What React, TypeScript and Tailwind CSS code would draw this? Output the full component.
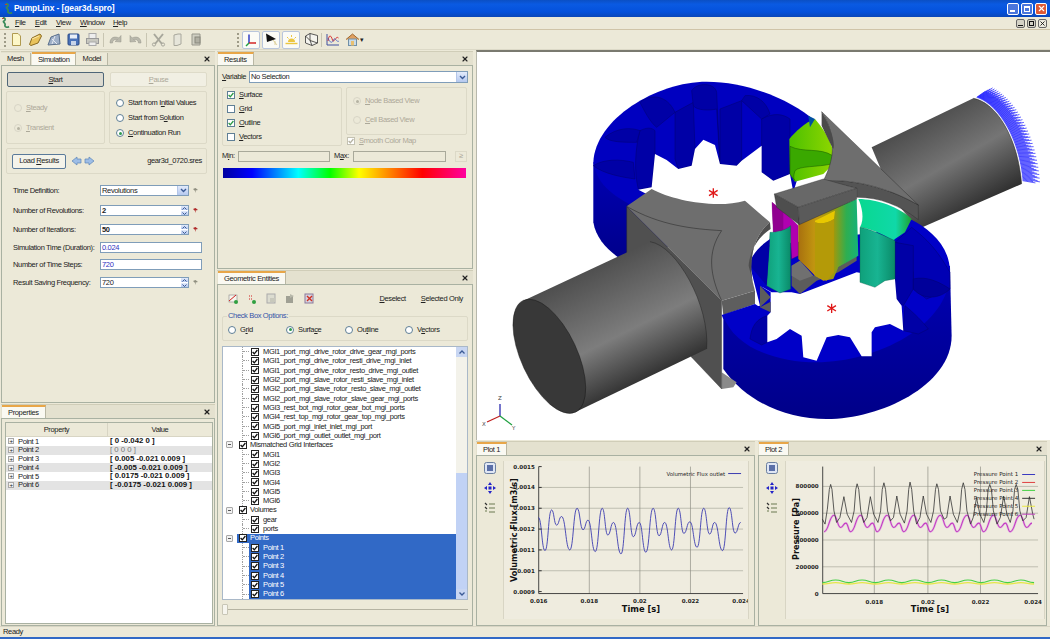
import React from "react";
import { X } from "lucide-react";

const FONT = "font-['Liberation_Sans',sans-serif]";

function smooth(p: number[][]) {
  let d = `M${p[0][0]} ${p[0][1]}`;
  for (let i = 1; i < p.length; i++) {
    const m = (p[i - 1][0] + p[i][0]) / 2;
    d += ` C${m} ${p[i - 1][1]} ${m} ${p[i][1]} ${p[i][0]} ${p[i][1]}`;
  }
  return d;
}

// curves read off the plots (zoom px)
const flux = [[185,235],[205,335],[225,212],[240,258],[255,232],[280,333],[302,207],[320,272],[335,243],[357,338],[378,207],[395,288],[412,250],[435,345],[455,207],[472,293],[490,250],[510,340],[532,207],[550,290],[567,250],[588,333],[608,207],[625,283],[643,248],[665,325],[685,207],[703,285],[718,250],[742,335],[762,205],[780,282],[797,250]].map(([x, y]) => [x / 3 + 476, y / 3 + 440]);
const press = [[197,240],[205,255],[212,210],[218,150],[222,135],[226,150],[232,215],[240,250],[250,235],[262,172],[272,225],[285,250],[293,215],[298,150],[302,133],[307,150],[313,215],[322,250],[332,235],[342,172],[352,225],[365,250],[373,215],[378,150],[383,130],[388,150],[394,215],[403,245],[412,235],[422,170],[432,225],[445,252],[453,215],[458,150],[462,128],[467,150],[473,215],[482,255],[492,235],[502,170],[512,225],[525,250],[533,215],[539,150],[543,133],[548,150],[554,215],[565,240],[573,235],[583,170],[593,225],[605,250],[613,215],[618,150],[623,130],[628,150],[634,215],[645,255],[653,235],[663,175],[673,225],[685,250],[693,215],[698,150],[703,135],[708,150],[714,215],[725,255],[735,235],[745,170],[755,225],[765,250],[773,215],[778,150],[783,135],[788,150],[794,215],[803,245],[813,235],[823,172],[833,225],[837,240]].map(([x, y]) => [x / 3 + 756, y / 3 + 440]);
const magenta = Array.from({ length: 9 }).flatMap((_, i) => {
  const o = 197 + i * 80.4;
  return [[o + 5, 278], [o + 35, 228], [o + 55, 265], [o + 71, 252]];
}).filter((p) => p[0] < 838).map(([x, y]) => [x / 3 + 756, y / 3 + 440]);
const wave = (base: number, amp: number) =>
  Array.from({ length: 17 }).map((_, i) => [(197 + i * 40) / 3 + 756, (base + (i % 2 ? -amp : amp)) / 3 + 440]);

function Panel({ tab, tabs, className, children }: { tab: string; tabs?: string[]; className?: string; children: React.ReactNode }) {
  const list = tabs ?? [tab];
  return (
    <div className={`flex flex-col min-h-0 ${className ?? ""}`}>
      <div className="flex h-[14px] shrink-0 items-stretch bg-[#e4e1cf] border-t border-[#d0cdb8]">
        {list.map((t) =>
          t === tab ? (
            <div key={t} className="flex items-center px-[6px] bg-[#faf9f2] border-t-2 border-[#e8a648] border-r border-r-[#b9b7a4] ml-px">{t}</div>
          ) : (
            <div key={t} className="flex items-center px-[6px] bg-[#ece9d8] border-r border-[#b9b7a4] mt-px">{t}</div>
          )
        )}
        <div className="ml-auto flex items-center pr-[4px]">
          <X size={8} strokeWidth={3.5} color="#222" />
        </div>
      </div>
      <div className="flex-1 min-h-0 border border-[#a9b1a2] bg-[#ece9d8] flex flex-col">{children}</div>
    </div>
  );
}

function Radio({ on, off, label, className }: { on?: boolean; off?: boolean; label: React.ReactNode; className?: string }) {
  return (
    <div className={`flex items-center gap-[4px] ${off ? "text-[#aca899]" : ""} ${className ?? ""}`}>
      <span className={`flex items-center justify-center w-[8px] h-[8px] rounded-full border ${off ? "border-[#d8d5c6] bg-[#ece9d8]" : "border-[#5f7f96] bg-white"}`}>
        {on && <span className={`w-[3px] h-[3px] rounded-full ${off ? "bg-[#b5b2a2]" : "bg-[#2f9a4f]"}`} />}
      </span>
      <span>{label}</span>
    </div>
  );
}

function Check({ on, tone = "green", off }: { on?: boolean; tone?: "green" | "black"; off?: boolean }) {
  const border = tone === "black" ? "border-[#222]" : off ? "border-[#c4c2b2]" : "border-[#5f7f96]";
  const stroke = tone === "black" ? "#111" : off ? "#b5b2a2" : "#2c9a45";
  return (
    <span className={`shrink-0 flex items-center justify-center w-[8px] h-[8px] border bg-white ${border}`}>
      {on && (
        <svg width="6" height="6" viewBox="0 0 6 6">
          <path d="M0.6 3 L2.3 4.8 L5.4 1" fill="none" stroke={stroke} strokeWidth="1.3" />
        </svg>
      )}
    </span>
  );
}

function Arrow() {
  return (
    <div className="w-[11px] shrink-0 border-l border-[#b4c6e8] bg-[linear-gradient(#e3ebfb,#b5c8ef)] flex items-center justify-center">
      <svg width="7" height="5" viewBox="0 0 7 5">
        <path d="M1 1 L3.5 3.5 L6 1" fill="none" stroke="#3a5a95" strokeWidth="1.4" />
      </svg>
    </div>
  );
}

function Spin() {
  return (
    <div className="w-[7px] shrink-0 flex flex-col gap-px bg-white">
      <div className="flex-1 bg-[linear-gradient(#e3ebfb,#b5c8ef)] flex items-center justify-center">
        <svg width="5" height="3" viewBox="0 0 5 3"><path d="M0.5 2.5 L2.5 0.5 L4.5 2.5" fill="none" stroke="#3a5a95" /></svg>
      </div>
      <div className="flex-1 bg-[linear-gradient(#e3ebfb,#b5c8ef)] flex items-center justify-center">
        <svg width="5" height="3" viewBox="0 0 5 3"><path d="M0.5 0.5 L2.5 2.5 L4.5 0.5" fill="none" stroke="#3a5a95" /></svg>
      </div>
    </div>
  );
}

function Pin({ red }: { red?: boolean }) {
  return (
    <svg width="7" height="7" viewBox="0 0 7 7" className="shrink-0 ml-[3px]">
      <path d="M1 2 L3.5 1 L6 3 L3.5 3.6 L4 6 L2.6 3.6 Z" fill={red ? "#b02a2a" : "#8f8f80"} />
    </svg>
  );
}

function FormRow({ label, kind, value, pin, bold, blue, className }: { label: string; kind: "combo" | "spin" | "text"; value: string; pin?: "red" | "gray"; bold?: boolean; blue?: boolean; className: string }) {
  return (
    <div className={`flex items-center h-[11px] ${className}`}>
      <div className="w-[87px] shrink-0 whitespace-nowrap">{label}</div>
      <div className={`flex items-stretch h-full border border-[#7f9db9] bg-white pl-px ${kind === "text" ? "w-[102px]" : "w-[89px]"}`}>
        <span className={`flex-1 leading-[9px] ${bold ? "font-bold" : ""} ${blue ? "text-[#3030c0]" : ""}`}>{value}</span>
        {kind === "combo" && <Arrow />}
        {kind === "spin" && <Spin />}
      </div>
      {pin && <Pin red={pin === "red"} />}
    </div>
  );
}

function Group({ className, children }: { className?: string; children: React.ReactNode }) {
  return <div className={`border border-[#dcd9c7] rounded-[2px] ${className ?? ""}`}>{children}</div>;
}

function Tool({ boxed, children }: { boxed?: boolean; children: React.ReactNode }) {
  return (
    <div className={`w-[18px] h-[18px] flex items-center justify-center ${boxed ? "bg-[#fbfbf6] border border-[#b9c6dc] rounded-[2px]" : ""}`}>
      <svg width="15" height="15" viewBox="0 0 15 15">{children}</svg>
    </div>
  );
}

function Grip() {
  return <div className="w-[2px] h-[14px] border-l-2 border-dotted border-[#9e9b88]" />;
}

function Logo() {
  return (
    <svg width="9" height="12" viewBox="0 0 9 12">
      <path d="M2 1 C4 0 5 3 3 4 C1 5 5 6 4 8 C3.5 10 6 11 8 9.5" fill="none" stroke="#3a8a58" strokeWidth="1.7" />
      <path d="M1 1.5 L3 1.5" stroke="#b34a3a" strokeWidth="1" />
    </svg>
  );
}

const GEOM = [
  "MGI1_port_mgi_drive_rotor_drive_gear_mgi_ports",
  "MGI1_port_mgi_drive_rotor_resti_drive_mgi_inlet",
  "MGI1_port_mgi_drive_rotor_resto_drive_mgi_outlet",
  "MGI2_port_mgi_slave_rotor_resti_slave_mgi_inlet",
  "MGI2_port_mgi_slave_rotor_resto_slave_mgi_outlet",
  "MGI2_port_mgi_slave_rotor_slave_gear_mgi_ports",
  "MGI3_rest_bot_mgi_rotor_gear_bot_mgi_ports",
  "MGI4_rest_top_mgi_rotor_gear_top_mgi_ports",
  "MGI5_port_mgi_inlet_inlet_mgi_port",
  "MGI6_port_mgi_outlet_outlet_mgi_port",
];

function Leaf({ text, sel }: { text: string; sel?: boolean }) {
  return (
    <div className="flex h-[9.38px] items-center pl-[19px] whitespace-nowrap">
      <div className="w-px h-full border-l border-dotted border-[#a0a0a0]" />
      <div className="w-[6px] border-t border-dotted border-[#a0a0a0]" />
      <div className={`flex-1 h-full flex items-center pl-[2px] gap-[4px] ${sel ? "bg-[#3169c6] text-white" : ""}`}>
        <Check on tone="black" />
        <span>{text}</span>
      </div>
    </div>
  );
}

function Parent({ text, sel }: { text: string; sel?: boolean }) {
  return (
    <div className="flex h-[9.38px] items-center pl-[3px] whitespace-nowrap">
      <span className="flex items-center justify-center w-[7px] h-[7px] border border-[#a8a8a8] bg-[#f2f2f2] rounded-[1px] text-[#666] mr-[4px]">
        <span className="w-[3px] h-px bg-[#555]" />
      </span>
      <div className={`flex-1 h-full flex items-center gap-[2px] pl-[2px] ${sel ? "bg-[#3169c6] text-white" : ""}`}>
        <Check on tone="black" />
        <span className="ml-[1px]">{text}</span>
      </div>
    </div>
  );
}

function PlotTools() {
  return (
    <div className="w-[26px] shrink-0 flex flex-col items-center gap-[8px] pt-[6px]">
      <svg width="12" height="12" viewBox="0 0 12 12">
        <rect x="0.5" y="0.5" width="11" height="11" rx="2" fill="#dfe6f4" stroke="#6a7f9f" />
        <rect x="3" y="3" width="6" height="6" fill="#5a6fa8" />
      </svg>
      <svg width="12" height="12" viewBox="0 0 12 12" fill="#2323c8">
        <path d="M6 0 L8 3 H4 Z M6 12 L4 9 H8 Z M0 6 L3 4 V8 Z M12 6 L9 8 V4 Z" />
        <rect x="4.5" y="4.5" width="3" height="3" />
      </svg>
      <svg width="12" height="12" viewBox="0 0 12 12">
        <path d="M1 1 L3 3 M1 5 L3 7" stroke="#333" strokeWidth="1.2" />
        <path d="M1 9 H3 M5 2 H11 M5 6 H11 M5 10 H11" stroke="#6a7a50" strokeWidth="1.2" />
      </svg>
    </div>
  );
}

function Plot1() {
  const ys: [string, number][] = [["0.0015",467],["0.0014",488],["0.0013",509],["0.0012",530],["0.0011",551],["0.001",572],["0.0009",593]];
  const xs: [string, number][] = [["0.016",538],["0.018",589],["0.02",640],["0.022",691],["0.024",742]];
  return (
    <svg viewBox="503 462 246 158" width="246" height="158" className="shrink-0 mt-[5px] block bg-[#efecdf] border-x border-[#d8d5c4] tracking-normal">
      {ys.slice(1, 6).map(([, y]) => <line key={y} x1="538" x2="744" y1={y} y2={y} stroke="#a9a99c" strokeWidth="0.7" />)}
      {xs.slice(1, 4).map(([, x]) => <line key={x} x1={x} x2={x} y1="467" y2="595" stroke="#8f8f85" strokeWidth="0.7" />)}
      <path d="M538 467 V595 H744" fill="none" stroke="#333" strokeWidth="0.9" />
      <path d={smooth(flux)} fill="none" stroke="#3a3ab0" strokeWidth="0.9" />
      {ys.map(([t, y]) => <g key={t}><line x1="538" x2="541" y1={y} y2={y} stroke="#333" /><text x="534" y={y + 2} textAnchor="end" fontSize="5.6" fontWeight="bold" fill="#222" fontFamily="DejaVu Sans">{t}</text></g>)}
      {xs.map(([t, x]) => <text key={t} x={x} y="605" textAnchor="middle" fontSize="5.6" fontWeight="bold" fill="#222" fontFamily="DejaVu Sans">{t}</text>)}
      <text x="726" y="476" textAnchor="end" fontSize="5.4" fill="#222" fontFamily="DejaVu Sans">Volumetric Flux outlet</text>
      <line x1="729" x2="742" y1="474" y2="474" stroke="#3a3ab0" />
      <text x="641" y="614" textAnchor="middle" fontSize="8.4" fontWeight="bold" fill="#111" fontFamily="DejaVu Sans">Time [s]</text>
      <text transform="translate(516 531) rotate(-90)" textAnchor="middle" fontSize="8.2" fontWeight="bold" fill="#111" fontFamily="DejaVu Sans">Volumetric Flux [m3/s]</text>
    </svg>
  );
}

function Plot2() {
  const ys: [string, number][] = [["800000",487],["600000",514],["400000",541],["200000",568],["0",595]];
  const xs: [string, number][] = [["0.018",874],["0.02",928],["0.022",981],["0.024",1034]];
  const legend: [string, string, number][] = [["Pressure Point 1","#3838c0",475],["Pressure Point 2","#e04040",483],["Pressure Point 3","#40d040",491],["Pressure Point 4","#333333",499],["Pressure Point 5","#e8e840",507],["Pressure Point 6","#c040c0",515]];
  return (
    <svg viewBox="785 462 260 158" width="260" height="158" className="shrink-0 mt-[5px] block bg-[#efecdf] border-x border-[#d8d5c4] tracking-normal">
      {ys.slice(0, 4).map(([, y]) => <line key={y} x1="822" x2="1039" y1={y} y2={y} stroke="#a9a99c" strokeWidth="0.7" />)}
      {xs.slice(0, 3).map(([, x]) => <line key={x} x1={x} x2={x} y1="467" y2="595" stroke="#8f8f85" strokeWidth="0.7" />)}
      <path d="M822 467 V595 H1039" fill="none" stroke="#333" strokeWidth="0.9" />
      <path d={smooth(wave(434, 2))} fill="none" stroke="#e6e648" strokeWidth="1.3" />
      <path d={smooth(wave(428, 4))} fill="none" stroke="#45d045" strokeWidth="1.1" />
      <path d={smooth(magenta)} fill="none" stroke="#e0a0e0" strokeWidth="2.4" opacity="0.6" />
      <path d={smooth(magenta)} fill="none" stroke="#c23cc2" strokeWidth="1.1" />
      <path d={`M${press.map((p) => p.join(" ")).join(" L")}`} fill="none" stroke="#333" strokeWidth="0.8" />
      {ys.map(([t, y]) => <text key={t} x="818" y={y + 2} textAnchor="end" fontSize="5.6" fontWeight="bold" fill="#222" fontFamily="DejaVu Sans">{t}</text>)}
      {xs.map(([t, x]) => <text key={t} x={x} y="605" textAnchor="middle" fontSize="5.6" fontWeight="bold" fill="#222" fontFamily="DejaVu Sans">{t}</text>)}
      {legend.map(([t, c, y]) => (
        <g key={t}>
          <text x="1019" y={y + 2} textAnchor="end" fontSize="5.6" fill="#222" fontFamily="DejaVu Sans">{t}</text>
          <line x1="1023" x2="1036" y1={y} y2={y} stroke={c} />
        </g>
      ))}
      <text x="930" y="614" textAnchor="middle" fontSize="8.4" fontWeight="bold" fill="#111" fontFamily="DejaVu Sans">Time [s]</text>
      <text transform="translate(798 530) rotate(-90)" textAnchor="middle" fontSize="8.2" fontWeight="bold" fill="#111" fontFamily="DejaVu Sans">Pressure [Pa]</text>
    </svg>
  );
}

function Asterisk({ x, y }: { x: number; y: number }) {
  return (
    <g stroke="#e01818" strokeWidth="4">
      <path d={`M${x} ${y - 14} V${y + 14} M${x - 13} ${y - 8} L${x + 13} ${y + 8} M${x - 13} ${y + 8} L${x + 13} ${y - 8}`} />
    </g>
  );
}

function Scene() {
  // drawn in coordinates of a 3x crop of the viewport
  const vectors = Array.from({ length: 150 }).map((_, i) => {
    const t = i / 149;
    const u = 1 - t;
    const x = u * u * u * 1250 + 3 * u * u * t * 1315 + 3 * u * t * t * 1378 + t * t * t * 1388;
    const y = u * u * u * 115 + 3 * u * u * t * 135 + 3 * u * t * t * 240 + t * t * t * 365;
    const a = (-35 + 45 * t) * (Math.PI / 180);
    const len = 32 + (i % 4) * 7;
    return [x, y, x + Math.cos(a) * len, y + Math.sin(a) * len];
  });
  return (
    <svg viewBox="477 53 573 388" className="block w-full h-full tracking-normal">
      <defs>
        <linearGradient id="cylL" gradientUnits="userSpaceOnUse" x1="60" y1="640" x2="240" y2="1000">
          <stop offset="0" stopColor="#4e4e4e" />
          <stop offset="0.55" stopColor="#7d7d7d" />
          <stop offset="1" stopColor="#262626" />
        </linearGradient>
        <linearGradient id="cylR" gradientUnits="userSpaceOnUse" x1="1060" y1="190" x2="1220" y2="470">
          <stop offset="0" stopColor="#4c4c4c" />
          <stop offset="0.5" stopColor="#757575" />
          <stop offset="1" stopColor="#2e2e2e" />
        </linearGradient>
        <linearGradient id="mid" x1="0" x2="1" y1="0" y2="0">
          <stop offset="0" stopColor="#a8700f" />
          <stop offset="0.3" stopColor="#c49a10" />
          <stop offset="0.6" stopColor="#9a9a10" />
          <stop offset="0.8" stopColor="#2fae50" />
          <stop offset="1" stopColor="#14b27a" />
        </linearGradient>
        <linearGradient id="teal" x1="0" x2="1" y1="0" y2="0">
          <stop offset="0" stopColor="#0fa07a" />
          <stop offset="0.5" stopColor="#18b492" />
          <stop offset="1" stopColor="#0a8a68" />
        </linearGradient>
        <linearGradient id="tealTop" x1="0" x2="1" y1="0" y2="0">
          <stop offset="0" stopColor="#08d890" />
          <stop offset="0.7" stopColor="#10d8a8" />
          <stop offset="1" stopColor="#20a030" />
        </linearGradient>
        <linearGradient id="blueSide" x1="0" x2="0" y1="0" y2="1">
          <stop offset="0" stopColor="#0000b4" />
          <stop offset="1" stopColor="#000088" />
        </linearGradient>
        <linearGradient id="greenTop" x1="0" x2="1" y1="0" y2="0">
          <stop offset="0" stopColor="#4cc000" />
          <stop offset="1" stopColor="#8ed600" />
        </linearGradient>
      </defs>
      <g transform="translate(560 60) scale(0.3333)">
        {/* back ring */}
        <path d="M100 310 L100 490 C110 550 160 590 215 620 L330 560 L300 400 Z" fill="url(#blueSide)" />
        <path d="M100 310 C105 180 290 68 440 68 C560 68 690 120 765 185 L700 400 L240 450 C170 420 110 380 100 310 Z" fill="#0000c0" />
        <g fill="#0000a6" stroke="#000070" strokeWidth="1.5">
          <path d="M240 215 C260 205 275 205 285 215 L285 285 L275 385 L235 390 C222 340 225 270 240 215 Z" />
          <path d="M345 160 L400 130 L405 270 L395 320 L355 330 L345 300 Z" />
          <path d="M395 95 C410 70 465 70 470 100 L480 315 L470 150 C450 155 410 155 400 140 Z" />
          <path d="M480 150 L545 125 L545 305 L530 320 L490 320 L480 315 Z" />
          <path d="M605 180 C640 160 670 165 690 180 L690 345 L640 365 L605 340 Z" />
          <path d="M100 320 C130 300 180 300 220 310 L225 360 C190 355 130 345 100 320 Z" />
          <path d="M135 235 C170 205 215 205 240 215 L230 250 C190 250 150 250 135 235 Z" />
          <path d="M240 130 C270 105 320 105 345 160 L290 205 C270 190 250 150 240 130 Z" />
          <path d="M555 110 C590 105 620 130 630 165 L605 180 L545 125 Z" />
        </g>
        <path d="M235 392 L275 385 L285 285 L320 303 L355 330 L395 320 L405 270 L430 242 L465 258 L480 315 L530 320 L545 305 L605 260 L605 340 L640 365 L690 345 L700 400 L640 440 L450 450 L270 410 Z" fill="#ffffff" />
        <path d="M688 240 C705 220 735 190 765 180 C800 220 820 260 820 290 L815 320 L790 345 L705 368 L690 345 Z" fill="url(#greenTop)" />
        <path d="M690 262 C730 282 780 265 818 290 L815 315 C770 325 720 320 705 335 C700 350 700 360 705 365 L690 345 Z" fill="#3aa800" stroke="#1a5a00" strokeWidth="1.5" />
        <path d="M745 170 L765 180 L750 205 Z" fill="#0050a0" />

        {/* right shaft and flow vectors */}
        <g stroke="#0c0cff" strokeWidth="2">
          {vectors.map((v, i) => <line key={i} x1={v[0]} y1={v[1]} x2={v[2]} y2={v[3]} />)}
        </g>
        <path d="M935 265 L1240 118 C1310 130 1375 240 1385 375 L1075 510 L1000 420 Z" fill="url(#cylR)" />
        <path d="M1240 118 C1310 130 1375 240 1385 375" fill="none" stroke="#222" strokeWidth="1.5" />

        {/* front ring */}
        <path d="M490 770 L490 930 C560 1030 680 1080 800 1080 C960 1080 1175 980 1175 830 L1170 620 L600 740 Z" fill="url(#blueSide)" />
        <path d="M490 770 C520 860 640 910 770 910 C950 910 1170 800 1170 640 C1170 560 1110 510 1050 480 L950 520 L620 560 L570 620 L600 740 Z" fill="#0000c8" />
        <path d="M1005 550 L1055 505 C1100 540 1130 570 1170 640 L1170 690 L1100 720 L1060 690 L1060 640 Z" fill="#0000b4" stroke="#000070" strokeWidth="1.5" />
        <path d="M1005 550 L1060 560 L1060 690 L1030 740 L1005 720 Z" fill="#0000a6" stroke="#000070" strokeWidth="1.5" />
        <path d="M1060 660 C1100 650 1140 670 1170 690 C1140 720 1090 725 1060 690 Z" fill="#00009a" stroke="#000070" strokeWidth="1.5" />
        <path d="M1030 815 L1035 740 C1060 760 1090 790 1105 810 L1075 825 Z" fill="#0000a6" stroke="#000070" strokeWidth="1.5" />
        <path d="M570 840 C575 800 590 780 622 770 L622 850 L605 858 Z" fill="#0000a6" stroke="#000070" strokeWidth="1.5" />
        <path d="M600 680 L635 700 L695 700 L720 705 L890 640 L1005 660 L1010 720 L1025 740 L1030 815 L990 795 L945 805 L935 820 L935 892 L905 892 L870 835 L835 828 L800 835 L770 905 L730 895 L725 830 L690 810 L650 840 L622 850 L622 770 L632 760 L632 700 Z" fill="#ffffff" />
        <path d="M695 620 L720 605 L760 650 L835 625 L890 590 L890 605 L835 640 L770 665 L720 705 L695 680 Z" fill="#5c5c5c" />
        <path d="M695 620 L720 605 L760 650 L720 665 L695 650 Z" fill="#707070" />

        {/* coloured gear teeth */}
        <path d="M636 430 L680 465 L715 500 L715 590 L695 600 L690 510 L640 520 Z" fill="#b000b0" stroke="#500050" strokeWidth="1" />
        <path d="M636 430 L670 460 L670 515 L640 520 Z" fill="#900090" />
        <path d="M715 490 L890 420 L895 590 L835 625 L820 660 L790 665 L765 650 L755 640 L715 600 Z" fill="url(#mid)" />
        <path d="M765 485 L825 455 L822 480 C800 495 780 495 765 490 Z" fill="#e8c800" />
        <path d="M765 490 C780 495 800 495 822 480 L822 640 L800 665 L765 650 Z" fill="#b49a08" />
        <path d="M895 420 C950 420 1020 445 1055 480 L1035 520 L1005 540 L1000 545 C960 520 930 510 900 505 C915 480 905 440 895 420 Z" fill="url(#tealTop)" />
        <path d="M900 505 C930 510 950 520 1005 545 L1005 660 L975 665 L945 685 L900 670 Z" fill="url(#teal)" stroke="#0c5c48" strokeWidth="1" />
        <path d="M630 520 C650 520 675 515 692 500 L692 690 L660 702 L620 680 Z" fill="url(#teal)" stroke="#0c5c48" strokeWidth="1" />
        <path d="M570 620 C570 590 600 560 630 540 L620 680 Z" fill="#0000a6" />

        {/* left plate */}
        <path d="M485 940 L530 970 L520 985 L485 990 Z" fill="#8a8a8a" />
        <path d="M200 442 L485 725 L485 990 L395 895 L200 610 Z" fill="#505050" stroke="#222" strokeWidth="1" />
        <path d="M485 725 L585 695 L585 735 L490 768 Z" fill="#5e5e5e" />
        <path d="M485 768 L585 735 L600 745 L490 780 Z" fill="#0000c8" />
        <path d="M200 442 L275 390 C340 425 470 450 555 425 L630 490 C590 520 555 600 585 695 L485 725 Z" fill="#6e6e6e" />
        <path d="M630 490 L632 510 C600 530 570 570 566 620 L585 695 C555 600 590 520 630 490 Z" fill="#4e4e4e" />
        <path d="M200 442 C300 500 400 510 485 515 C440 580 450 650 485 725" fill="none" stroke="#222" strokeWidth="1.5" />
        <path d="M600 680 L632 715 L600 745 L632 728 L632 760 L600 745 Z" fill="#5c5c5c" />

        {/* right plate and block */}
        <path d="M790 365 C900 360 1000 395 1075 438 L1075 482 C1020 440 960 415 890 415 L890 388 Z" fill="#545454" stroke="#222" strokeWidth="1" />
        <path d="M785 158 L1075 438 C1000 395 900 360 790 365 C825 300 830 230 785 158 Z" fill="#6e6e6e" stroke="#222" strokeWidth="1.2" />
        <path d="M785 158 C830 230 825 290 815 262 L785 200 Z" fill="#4a4a4a" />
        <path d="M643 405 L790 360 L890 388 L715 445 Z" fill="#686868" stroke="#222" strokeWidth="1" />
        <path d="M643 405 L715 445 L718 497 L650 445 Z" fill="#4e4e4e" stroke="#222" strokeWidth="1" />
        <path d="M715 445 L890 388 L890 420 L718 497 Z" fill="#5a5a5a" stroke="#222" strokeWidth="1" />

        {/* left shaft */}
        <path d="M-110 725 L270 548 C350 560 450 740 440 870 L45 1060 Z" fill="url(#cylL)" />
        <path d="M270 548 C350 560 450 740 440 870" fill="none" stroke="#222" strokeWidth="1.5" />
        <ellipse cx="-32" cy="892" rx="185" ry="84" transform="rotate(65 -32 892)" fill="#383838" stroke="#111" strokeWidth="1.2" />

        <Asterisk x={460} y={402} />
        <Asterisk x={815} y={748} />
      </g>
      {/* axis triad */}
      <g strokeWidth="1.3" fill="none">
        <path d="M500 417 V405" stroke="#2a2ab0" />
        <path d="M500 417 L487 423" stroke="#c02020" />
        <path d="M500 417 L512 426" stroke="#20a040" />
      </g>
      <text x="498" y="401" fontSize="5.5" fontFamily="DejaVu Sans" fill="#444">Z</text>
      <text x="482" y="427" fontSize="5.5" fontFamily="DejaVu Sans" fill="#444">X</text>
      <text x="512" y="431" fontSize="5.5" fontFamily="DejaVu Sans" fill="#444">Y</text>
    </svg>
  );
}

export default function App() {
  return (
    <div className={`w-[1050px] h-[639px] overflow-hidden flex flex-col bg-[#ece9d8] text-[#222] text-[7.5px] leading-none tracking-[-0.35px] ${FONT}`}>
      {/* Title bar */}
      <header className="h-[17px] shrink-0 flex items-center pl-[4px] pr-[3px] bg-[linear-gradient(#0b4fc4,#0a5ae2_25%,#0451dc_70%,#0a47b8)]">
        <Logo />
        <span className="ml-px text-white font-bold text-[8.5px] tracking-[-0.1px]">PumpLinx - [gear3d.spro]</span>
        <div className="ml-auto flex gap-[2px]">
          <div className="w-[12px] h-[12px] rounded-[2px] border border-white bg-[#4a76dc] flex items-end pl-[2px] pb-[2px]"><span className="w-[5px] h-[2px] bg-white" /></div>
          <div className="w-[12px] h-[12px] rounded-[2px] border border-white bg-[#4a76dc] flex items-center justify-center"><span className="w-[6px] h-[6px] border border-white border-t-2" /></div>
          <div className="w-[12px] h-[12px] rounded-[2px] border border-white bg-[#de5a36] flex items-center justify-center"><X size={9} strokeWidth={3} color="#fff" /></div>
        </div>
      </header>

      {/* Menu */}
      <div className="h-[13px] shrink-0 flex items-center pl-[1px] pr-[3px] border-b border-[#cfc4a8]">
        <Logo />
        <span className="ml-[5px] w-[20px]"><u>F</u>ile</span>
        <span className="w-[21px]"><u>E</u>dit</span>
        <span className="w-[24px]"><u>V</u>iew</span>
        <span className="w-[33px]"><u>W</u>indow</span>
        <span><u>H</u>elp</span>
        <div className="ml-auto flex gap-[2px]">
          <div className="w-[9px] h-[9px] bg-[#d4d2c6] border border-[#666] rounded-[2px] flex items-end justify-center pb-px"><span className="w-[5px] h-px bg-[#111]" /></div>
          <div className="w-[9px] h-[9px] bg-[#d4d2c6] border border-[#666] rounded-[2px] flex items-center justify-center"><span className="w-[5px] h-[5px] border border-[#111]" /></div>
          <div className="w-[9px] h-[9px] bg-[#eceae0] border border-[#666] rounded-[2px] flex items-center justify-center"><X size={7} strokeWidth={3} color="#111" /></div>
        </div>
      </div>

      {/* Toolbar */}
      <div className="h-[20px] shrink-0 flex items-center pl-[4px] border-b border-[#dcd9c7]">
        <Grip />
        <div className="ml-[1px] flex items-center gap-px">
          <Tool><path d="M3.5 1.5 H9 L11.5 4 V13.5 H3.5 Z" fill="#fdf7c8" stroke="#b09a50" /></Tool>
          <Tool><path d="M1.5 12.5 L4 6 L12 2 L13.5 4 L10 11 L3 13.5 Z" fill="#e9c35c" stroke="#8a6a20" /><path d="M4 7 L11 4" stroke="#fbe9a8" /></Tool>
          <Tool><path d="M1 13 L4 5 L12 2 L13 12 Z" fill="#9fb0c8" stroke="#5a6f8c" /><path d="M5 7 L10 12 M8 4 L5 12" stroke="#e4e8f0" /></Tool>
          <Tool><rect x="2" y="2" width="11" height="11" rx="1" fill="#4a72b8" stroke="#2b4a86" /><rect x="4" y="2.5" width="7" height="4" fill="#e8eef8" /><rect x="5" y="9" width="5" height="4" fill="#c8d4e8" /></Tool>
          <Tool><rect x="4" y="1.5" width="7" height="5" fill="#eee" stroke="#aaa" /><rect x="1.5" y="6.5" width="12" height="5" fill="#c8c8c0" stroke="#999" /><rect x="4" y="10" width="7" height="3.5" fill="#eee" stroke="#aaa" /></Tool>
        </div>
        <div className="mx-[2px] w-px h-[14px] bg-[#c8c5b2]" />
        <div className="flex items-center gap-[2px]">
          <Tool><path d="M2 11 C2 5 7 4 11 6 L13 3.5 L13 10 L7 9.5 L9.5 7.5 C7 7 4.5 8 4.5 11 Z" fill="#b9b8ac" stroke="#96958a" strokeWidth="0.5" /></Tool>
          <Tool><path d="M13 11 C13 5 8 4 4 6 L2 3.5 L2 10 L8 9.5 L5.5 7.5 C8 7 10.5 8 10.5 11 Z" fill="#b9b8ac" stroke="#96958a" strokeWidth="0.5" /></Tool>
        </div>
        <div className="mx-[2px] w-px h-[14px] bg-[#c8c5b2]" />
        <div className="flex items-center gap-px">
          <Tool><path d="M3 2 L11 12 M12 2 L4 12" stroke="#a8a79c" strokeWidth="2" /><circle cx="3" cy="12.5" r="1.6" fill="none" stroke="#a8a79c" /><circle cx="12" cy="12.5" r="1.6" fill="none" stroke="#a8a79c" /></Tool>
          <Tool><path d="M4 3 L8 2 H11 V12 L7 13.5 H4 Z" fill="#e6e5da" stroke="#a8a79c" /></Tool>
          <Tool><path d="M3 2 H11 V13 H3 Z" fill="#cfcec2" stroke="#98978c" /><rect x="6" y="5" width="5" height="6" fill="#b0afa3" stroke="#88877c" /></Tool>
        </div>
        <div className="ml-[32px]"><Grip /></div>
        <div className="ml-[3px] flex items-center gap-[2px]">
          <Tool boxed><path d="M5 11 V2.5" stroke="#2030c0" strokeWidth="1.4" /><path d="M5 11 L12 11" stroke="#d01818" strokeWidth="1.4" /><path d="M5 11 L2 14" stroke="#20a040" strokeWidth="1.4" /></Tool>
          <Tool boxed><path d="M2 1.5 L12 7 L3 10 Z" fill="#111" /><path d="M9 8 L13 13 M11 9 L11 13" stroke="#d8c888" strokeWidth="0.8" /></Tool>
          <Tool boxed><path d="M4 10 A3.5 3.5 0 0 1 11 10 Z" fill="#ecc640" /><path d="M1.5 11.5 H13.5" stroke="#ecc640" strokeWidth="1.4" /><path d="M7.5 3 V5 M3 5 L4.5 6.5 M12 5 L10.5 6.5" stroke="#ecc640" /></Tool>
          <Tool><path d="M1.5 4 L6 1.5 L13.5 3.5 V11 L8 13.5 L1.5 11 Z M6 1.5 V8.5 M1.5 4 L6 8.5 L13.5 11 M6 8.5 L8 13.5" fill="#f4f4ee" stroke="#333" strokeWidth="0.8" /></Tool>
          <div className="-mx-[1px] w-px h-[14px] bg-[#c8c5b2]" />
          <Tool><path d="M2 2 V13 H14" fill="none" stroke="#4050a0" /><path d="M3 9 C4 2 6 3 7.5 8 C9 12 11 3 13.5 6" fill="none" stroke="#d83030" /><path d="M3 6 C5 11 7 12 9 7 C10 5 12 11 14 9" fill="none" stroke="#3050c0" strokeWidth="0.7" /></Tool>
          <Tool><path d="M1 7.5 L7.5 2 L14 7.5" fill="#e0a060" stroke="#a06830" /><rect x="3.5" y="7" width="8" height="6.5" fill="#c9dbe8" stroke="#7090a8" /><rect x="6" y="9" width="3" height="4.5" fill="#e9c070" /></Tool>
          <span className="text-[7px] -ml-[3px]">▾</span>
        </div>
      </div>

      {/* Main */}
      <main className="flex-1 min-h-0 flex">
        {/* left column */}
        <div className="w-[216px] shrink-0 pl-px pr-[1px] pt-px flex flex-col gap-[1px]">
          <Panel tab="Simulation" tabs={["Mesh", "Simulation", "Model"]} className="h-[352px]">
            <div className="flex flex-col px-[4px] pt-[6px]">
              <div className="flex gap-[6px] pl-[1px]">
                <button className="w-[97px] h-[15px] rounded-[2px] border border-[#4f6678] bg-[#dcdad0]"><u>S</u>tart</button>
                <button className="w-[97px] h-[15px] rounded-[2px] border border-[#dedbc9] bg-[#f1efe3] text-[#aca899]"><u>P</u>ause</button>
              </div>
              <div className="flex gap-[4px] mt-[4px]">
                <Group className="w-[99px] h-[53px] flex flex-col gap-[12px] pl-[7px] pt-[12px]">
                  <Radio off label={<><u>S</u>teady</>} />
                  <Radio off on label={<><u>T</u>ransient</>} />
                </Group>
                <Group className="w-[98px] h-[53px] flex flex-col gap-[7px] pl-[6px] pt-[7px]">
                  <Radio label={<>Start from I<u>n</u>itial Values</>} />
                  <Radio label={<>Start from S<u>o</u>lution</>} />
                  <Radio on label={<><u>C</u>ontinuation Run</>} />
                </Group>
              </div>
              <Group className="mt-[4px] h-[26px] w-[201px] flex items-center pl-[5px] pr-[4px]">
                <button className="w-[54px] h-[15px] rounded-[2px] border border-[#5a7a9a] bg-[#f4f3ea]">Load <u>R</u>esults</button>
                <svg width="24" height="10" viewBox="0 0 24 10" className="ml-[5px]">
                  <path d="M1 5 L6 1 V3 H10 V7 H6 V9 Z" fill="#9dbde6" stroke="#5c85b8" strokeWidth="0.7" />
                  <path d="M23 5 L18 1 V3 H14 V7 H18 V9 Z" fill="#9dbde6" stroke="#5c85b8" strokeWidth="0.7" />
                </svg>
                <span className="ml-auto">gear3d_0720.sres</span>
              </Group>
              <div className="pl-[7px] flex flex-col">
                <FormRow className="mt-[11px]" label="Time Definition:" kind="combo" value="Revolutions" pin="gray" />
                <FormRow className="mt-[9px]" label="Number of Revolutions:" kind="spin" value="2" bold pin="red" />
                <FormRow className="mt-[8px]" label="Number of Iterations:" kind="spin" value="50" bold pin="red" />
                <FormRow className="mt-[7px]" label="Simulation Time (Duration):" kind="text" value="0.024" blue />
                <FormRow className="mt-[6px]" label="Number of Time Steps:" kind="text" value="720" blue />
                <FormRow className="mt-[7px]" label="Result Saving Frequency:" kind="spin" value="720" pin="gray" />
              </div>
            </div>
          </Panel>
          <Panel tab="Properties" className="flex-1">
            <div className="flex-1 m-[3px] mr-[1px] mb-[1px] border border-[#a9b1a2] bg-white flex flex-col">
              <div className="flex h-[14px] shrink-0 bg-[#ece9d8] border-b border-[#d8d5c4]">
                <div className="w-[102px] flex items-center justify-center border-r border-[#d8d5c4]">Property</div>
                <div className="flex-1 flex items-center justify-center">Value</div>
              </div>
              {[
                ["Point 1", "[ 0 -0.042 0 ]", false],
                ["Point 2", "[ 0 0 0 ]", true],
                ["Point 3", "[ 0.005 -0.021 0.009 ]", false],
                ["Point 4", "[ -0.005 -0.021 0.009 ]", true],
                ["Point 5", "[ 0.0175 -0.021 0.009 ]", false],
                ["Point 6", "[ -0.0175 -0.021 0.009 ]", true],
              ].map(([n, v, alt], i) => (
                <div key={n as string} className={`flex items-center h-[8.75px] shrink-0 ${alt ? "bg-[#e3e3e3]" : ""}`}>
                  <div className="w-[102px] flex items-center pl-[2px]">
                    <span className="flex items-center justify-center w-[6px] h-[6px] border border-[#a8a8a8] bg-[#f2f2f2] text-[6px] mr-[4px]">+</span>
                    <span>{n as string}</span>
                  </div>
                  <span className={`pl-[2px] text-[7.8px] tracking-normal ${i === 1 ? "text-[#777]" : "font-bold text-[#111]"}`}>{v as string}</span>
                </div>
              ))}
            </div>
          </Panel>
        </div>

        {/* middle column */}
        <div className="w-[260px] shrink-0 pr-[3px] pt-px flex flex-col gap-[1px] pl-[1px]">
          <Panel tab="Results" className="h-[218px]">
            <div className="flex flex-col px-[4px] pt-[5px]">
              <div className="flex items-center h-[12px]">
                <span className="w-[27px]"><u>V</u>ariable</span>
                <div className="flex-1 h-full flex border border-[#7f9db9] bg-white pl-px">
                  <span className="flex-1 leading-[10px]">No Selection</span>
                  <Arrow />
                </div>
              </div>
              <div className="flex gap-[4px] mt-[4px]">
                <Group className="w-[120px] h-[59px] flex flex-col gap-[6px] pl-[4px] pt-[3px]">
                  {[["S", "urface", true], ["G", "rid", false], ["O", "utline", true], ["V", "ectors", false]].map(([u, r, on]) => (
                    <div key={r as string} className="flex items-center gap-[4px]">
                      <Check on={on as boolean} />
                      <span><u>{u as string}</u>{r as string}</span>
                    </div>
                  ))}
                </Group>
                <div className="w-[121px] flex flex-col">
                  <Group className="h-[48px] flex flex-col gap-[11px] pl-[6px] pt-[9px]">
                    <Radio off on label={<><u>N</u>ode Based View</>} />
                    <Radio off label={<><u>C</u>ell Based View</>} />
                  </Group>
                  <div className="flex items-center gap-[4px] mt-[2px] text-[#aca899] pl-[1px]">
                    <Check on off />
                    <span><u>S</u>mooth Color Map</span>
                  </div>
                </div>
              </div>
              <div className="flex items-center mt-[4px] h-[12px]">
                <span className="w-[16px]">M<u>i</u>n:</span>
                <div className="w-[92px] h-[11px] border border-[#a9a99a] bg-[#ece9d8]" />
                <span className="ml-[4px] w-[19px]">M<u>a</u>x:</span>
                <div className="w-[93px] h-[11px] border border-[#a9a99a] bg-[#ece9d8]" />
                <div className="ml-[9px] w-[12px] h-[11px] border border-[#dcd9c7] flex items-center justify-center text-[#aca899]">≥</div>
              </div>
              <div className="mt-[6px] ml-px h-[10px] w-[243px] bg-[linear-gradient(to_right,#0000a0,#0000ff_12%,#00ffff_31%,#00ff00_44%,#ffff00_56%,#ff0000_82%,#ff00a0)]" />
            </div>
          </Panel>
          <Panel tab="Geometric Entities" className="flex-1">
            <div className="flex flex-col px-[4px]">
              <div className="flex items-center h-[27px] pl-[6px]">
                <svg width="84" height="11" viewBox="0 0 84 11" className="overflow-visible">
                  <g>
                    <rect x="1" y="2" width="8" height="7" fill="#f6f6ee" stroke="#888" strokeWidth="0.6" />
                    <path d="M1 8 L8 2" stroke="#d02020" />
                    <circle cx="8" cy="9" r="2" fill="#2fa040" />
                  </g>
                  <g>
                    <path d="M21 3 H25 M21 6 H24" stroke="#d02020" strokeDasharray="1 1" />
                    <circle cx="26" cy="9" r="2" fill="#2fa040" />
                  </g>
                  <g>
                    <rect x="39" y="1" width="8" height="9" fill="#dcdcd0" stroke="#aaa" />
                    <rect x="42" y="5" width="5" height="4" fill="#c8c8bc" />
                  </g>
                  <g>
                    <rect x="58" y="3" width="7" height="7" fill="#a0a094" />
                    <path d="M62 1 L66 3 L62 5 Z" fill="#b8b8aa" />
                  </g>
                  <g>
                    <rect x="77" y="1" width="8" height="9" fill="#d8d4e0" stroke="#8a7a9a" />
                    <path d="M79 3 L84 8 M84 3 L79 8" stroke="#d03020" strokeWidth="1.4" />
                  </g>
                </svg>
                <span className="ml-auto"><u>D</u>eselect</span>
                <span className="ml-[15px] mr-[5px]"><u>S</u>elected Only</span>
              </div>
              <div className="relative z-10 self-start ml-[5px] px-px bg-[#ece9d8] text-[#3353a8] h-[8px] leading-[8px]">Check Box Options:</div>
              <div className="flex items-center h-[25px] border border-[#dcd9c7] rounded-[2px] pl-[5px] pt-[2px] -mt-[4px]">
                <Radio className="w-[58px]" label={<>G<u>r</u>id</>} />
                <Radio on className="w-[59px]" label={<>Surfa<u>c</u>e</>} />
                <Radio className="w-[60px]" label={<>Ou<u>t</u>line</>} />
                <Radio label={<>V<u>e</u>ctors</>} />
              </div>
              <div className="mt-[5px] h-[254px] border border-[#a9b8c8] bg-white flex">
                <div className="flex-1 min-w-0 flex flex-col overflow-hidden">
                  {GEOM.map((g) => <Leaf key={g} text={g} />)}
                  <Parent text="Mismatched Grid Interfaces" />
                  {["MGI1", "MGI2", "MGI3", "MGI4", "MGI5", "MGI6"].map((g) => <Leaf key={g} text={g} />)}
                  <Parent text="Volumes" />
                  {["gear", "ports"].map((g) => <Leaf key={g} text={g} />)}
                  <Parent text="Points" sel />
                  {["Point 1", "Point 2", "Point 3", "Point 4", "Point 5", "Point 6"].map((g) => <Leaf key={g} text={g} sel />)}
                </div>
                <div className="w-[11px] shrink-0 flex flex-col bg-[#f3f2ea]">
                  <div className="h-[10px] bg-[#c8d6f2] flex items-center justify-center">
                    <svg width="6" height="4" viewBox="0 0 6 4"><path d="M0.5 3.5 L3 1 L5.5 3.5" fill="none" stroke="#3a5a95" strokeWidth="1.3" /></svg>
                  </div>
                  <div className="h-[116px]" />
                  <div className="flex-1 bg-[#c1d2f5]" />
                  <div className="h-[10px] bg-[#c8d6f2] flex items-center justify-center">
                    <svg width="6" height="4" viewBox="0 0 6 4"><path d="M0.5 0.5 L3 3 L5.5 0.5" fill="none" stroke="#3a5a95" strokeWidth="1.3" /></svg>
                  </div>
                </div>
              </div>
              <div className="mt-[4px] h-[11px] flex items-center">
                <div className="w-[6px] h-[11px] bg-[#f6f5ee] border border-[#c8c6b6] rounded-[1px]" />
                <div className="flex-1 h-px bg-[#b5b3a2]" />
              </div>
            </div>
          </Panel>
        </div>

        {/* right column */}
        <div className="flex-1 min-w-0 flex flex-col">
          <div className="h-[390px] shrink-0 bg-white border-t-2 border-l border-t-[#7a7a70] border-l-[#b8b8ac] overflow-hidden">
            <Scene />
          </div>
          <div className="flex-1 min-h-0 flex gap-[3px] pt-px">
            <Panel tab="Plot 1" className="w-[279px] shrink-0">
              <div className="flex flex-1 min-h-0">
                <PlotTools />
                <Plot1 />
              </div>
            </Panel>
            <Panel tab="Plot 2" className="w-[289px] shrink-0">
              <div className="flex flex-1 min-h-0">
                <PlotTools />
                <Plot2 />
              </div>
            </Panel>
          </div>
        </div>
      </main>

      {/* Status bar */}
      <footer className="h-[13px] shrink-0 flex flex-col border-t border-[#d8d5c4]">
        <div className="flex-1 flex items-center pl-[3px]">Ready</div>
        <div className="h-[2px] bg-[#3169c6]" />
      </footer>
    </div>
  );
}
